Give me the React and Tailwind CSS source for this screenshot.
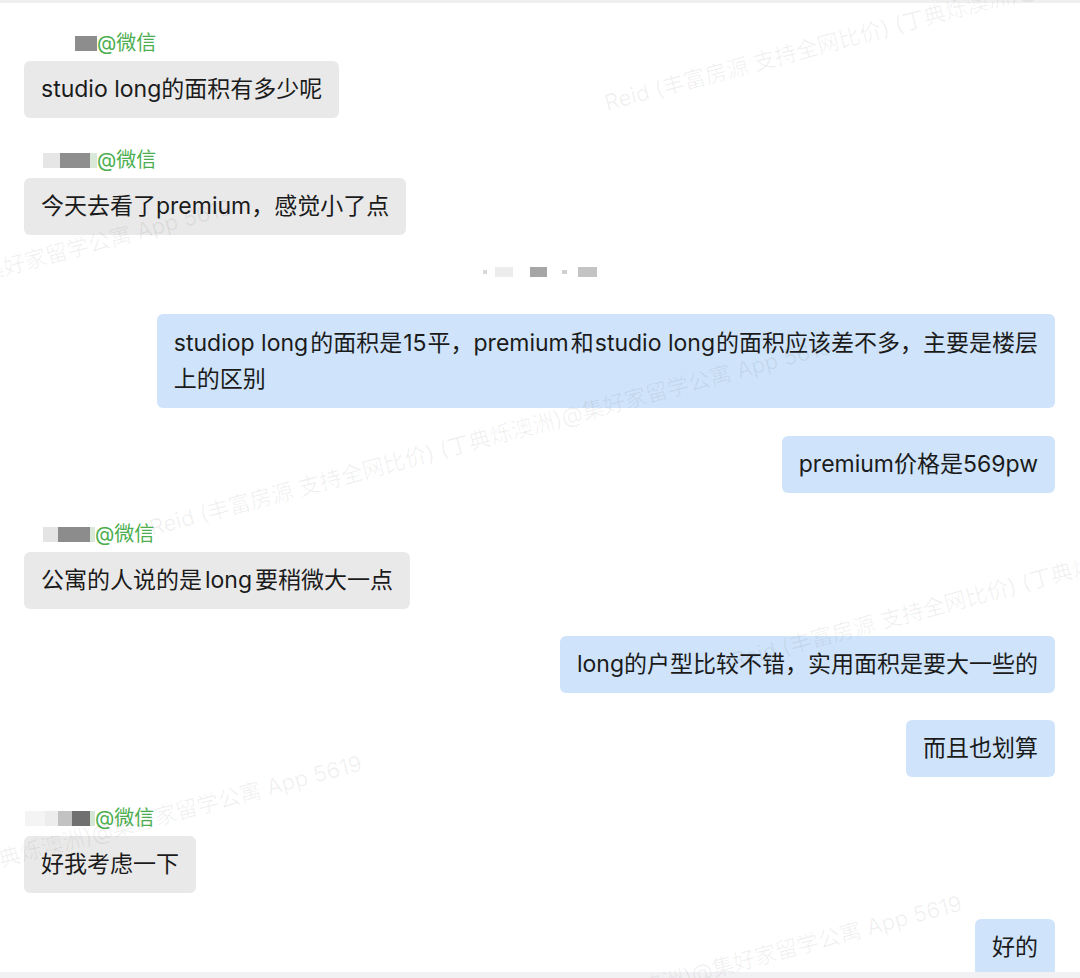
const WM = 'Reid (丰富房源 支持全网比价) (丁典烁澳洲)@集好家留学公寓 App 5619'

// faint diagonal watermark copies, placed where their fragments show in the shot
const marks = [
  { x: 605, y: 92 },
  { x: -450, y: 378 },
  { x: 150, y: 517 },
  { x: 732, y: 650 },
  { x: -320, y: 934 },
  { x: 280, y: 1074 },
]

function Label({ name, shift = 0 }) {
  return (
    <div className="flex items-center h-6 text-[20px] leading-6 text-[#4cae4f]" style={{ marginLeft: shift }}>
      {name.map((b, i) => (
        <span key={i} className={`h-[15px] blur-[0.6px] ${b.c}`} style={{ width: b.w }} />
      ))}
      <span>@微信</span>
    </div>
  )
}

function Left({ children, className = '' }) {
  return (
    <div className={`self-start rounded-md bg-[#e9e9e9] px-[17px] py-[11px] leading-[35px] whitespace-nowrap ${className}`}>
      {children}
    </div>
  )
}

function Right({ children, className = '' }) {
  return (
    <div className={`self-end rounded-md bg-[#cfe4fa] px-[17px] py-[11px] leading-[35px] whitespace-nowrap ${className}`}>
      {children}
    </div>
  )
}

export default function App() {
  return (
    <div className="relative flex h-[978px] w-[1080px] flex-col overflow-hidden bg-white font-[Inter,'Noto_Sans_CJK_SC',sans-serif] text-[23px] text-[#1b1b1b]">
      <div className="h-[3px] bg-[#efefef]" />

      <div className="flex flex-1 flex-col overflow-hidden pl-6 pr-[25px]">
        <div className="mt-[28px]">
          <Label shift={51} name={[{ w: 22, c: 'bg-[#8d8d8d]' }]} />
        </div>
        <Left className="mt-[6px]">studio long的面积有多少呢</Left>

        <div className="mt-[30px]">
          <Label
            shift={19}
            name={[
              { w: 17, c: 'bg-[#e6e6e6]' },
              { w: 30, c: 'bg-[#8e8e8e]' },
              { w: 7, c: 'bg-[#d9e8d9]' },
            ]}
          />
        </div>
        <Left className="mt-[6px]">今天去看了premium，感觉小了点</Left>

        <div className="mt-[32px] flex h-3 items-center gap-0 pl-[459px]">
          <span className="h-1 w-1 bg-[#d8d8d8] blur-[0.5px]" />
          <span className="ml-2 h-[10px] w-[18px] bg-[#ececec] blur-[0.6px]" />
          <span className="ml-[17px] h-[10px] w-[17px] bg-[#a6a6a6] blur-[0.6px]" />
          <span className="ml-[15px] h-1 w-[5px] bg-[#cfcfcf] blur-[0.5px]" />
          <span className="ml-[11px] h-[10px] w-[19px] bg-[#c4c4c4] blur-[0.6px]" />
        </div>

        <Right className="mt-[37px] leading-[36px] py-[10.5px]">
          <span className="mr-[2px]">studiop long</span>的面积是<span className="mx-[1px]">15</span>平，
          <span className="mr-[2px]">premium</span>和<span className="mx-[1px]">studio long</span>
          的面积应该差不多，主要是楼层
          <br />
          上的区别
        </Right>
        <Right className="mt-7">premium价格是569pw</Right>

        <div className="mt-[29px]">
          <Label
            shift={19}
            name={[
              { w: 15, c: 'bg-[#e4e4e4]' },
              { w: 32, c: 'bg-[#8c8c8c]' },
              { w: 5, c: 'bg-[#d9e8d9]' },
            ]}
          />
        </div>
        <Left className="mt-[6px]">
          公寓的人说的是<span className="mx-[3px]">long</span>要稍微大一点
        </Left>

        <Right className="mt-[27px]">long的户型比较不错，实用面积是要大一些的</Right>
        <Right className="mt-[27px]">而且也划算</Right>

        <div className="mt-[29px]">
          <Label
            shift={1}
            name={[
              { w: 20, c: 'bg-[#f4f4f4]' },
              { w: 13, c: 'bg-[#ededed]' },
              { w: 14, c: 'bg-[#c2c2c2]' },
              { w: 18, c: 'bg-[#707070]' },
              { w: 5, c: 'bg-[#d6e6d6]' },
            ]}
          />
        </div>
        <Left className="mt-[6px]">好我考虑一下</Left>

        <Right className="mt-[26px] shrink-0">好的</Right>
      </div>

      <div className="h-[6px] bg-[#f1f1f3]" />

      <div className="pointer-events-none absolute inset-0">
        {marks.map((m, i) => (
          <span
            key={i}
            className="absolute origin-left -rotate-[15deg] whitespace-nowrap text-[22px] leading-[22px] text-black/[0.06]"
            style={{ left: m.x, top: m.y }}
          >
            {WM}
          </span>
        ))}
      </div>
    </div>
  )
}
